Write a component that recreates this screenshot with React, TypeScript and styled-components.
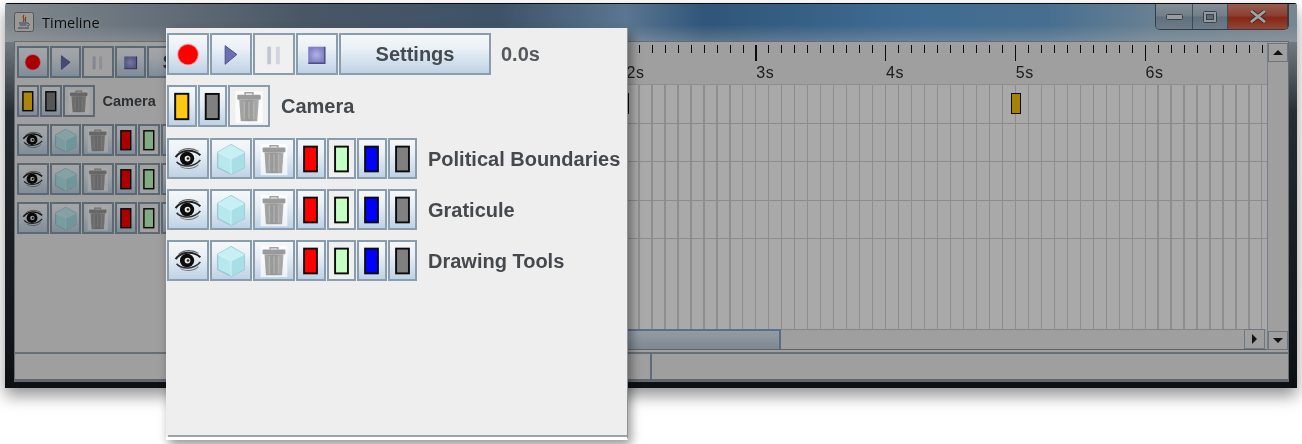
import React from 'react';
import styled, { createGlobalStyle, css } from 'styled-components';

const GlobalStyle = createGlobalStyle`
  html, body {
    margin: 0;
    padding: 0;
    background: #ffffff;
    font-family: 'Liberation Sans', Arial, sans-serif;
    overflow: hidden;
  }
`;

const SECOND = 129.75;
const layers = ['Political Boundaries', 'Graticule', 'Drawing Tools'];
const seconds = [0, 1, 2, 3, 4, 5, 6];

const Page = styled.div`
  position: relative;
  width: 1302px;
  height: 444px;
  padding: 3px 0 0 5px;
  box-sizing: border-box;
  filter: blur(0.45px);
`;

const Window = styled.div`
  position: relative;
  width: 1292px;
  height: 385px;
  display: flex;
  flex-direction: column;
  box-shadow: 0 8px 16px rgba(0, 0, 0, 0.42);
  border-radius: 3px 3px 0 0;
  overflow: hidden;
  background: linear-gradient(180deg, #a9b5bf 40px, #3b434c 110px, #14181d 100%);
`;

const Dim = styled.div`
  position: absolute;
  inset: 0;
  background: rgba(0, 0, 0, 0.33);
  pointer-events: none;
`;

const TitleBar = styled.div`
  height: 39px;
  flex: none;
  display: flex;
  align-items: flex-start;
  box-sizing: border-box;
  padding-left: 9px;
  border-top: 1px solid #0a0d10;
  background:
    linear-gradient(180deg, transparent 55%, rgba(255, 255, 255, 0.38) 100%),
    linear-gradient(90deg, #c2ccd4 0, #9aa9b8 140px, #6d8198 300px, #5d7c9c 495px, #87b0d8 620px, #4780b6 700px, #5e9fda 900px, #6aa5d8 1040px, #9cc0da 1150px, #b4c8d8 100%);
`;

const AppIcon = styled.svg`
  width: 20px;
  height: 20px;
  margin-top: 8px;
`;

const WindowTitle = styled.span`
  margin: 9px 0 0 8px;
  font-family: 'Open Sans', 'Noto Sans', sans-serif;
  font-size: 14.5px;
  line-height: 20px;
  color: #0e1418;
  text-shadow: 0 0 5px rgba(255, 255, 255, 0.55);
`;

const Controls = styled.div`
  margin: 0 8px 0 auto;
  height: 25px;
  display: flex;
  border: 1px solid #4d5c6a;
  border-top: 0;
  border-radius: 0 0 5px 5px;
  overflow: hidden;
`;

const Control = styled.div<{ $w: number; $close?: boolean }>`
  width: ${(p) => p.$w}px;
  box-sizing: border-box;
  display: flex;
  align-items: center;
  justify-content: center;
  border-right: 1px solid rgba(60, 80, 100, 0.7);
  background: ${(p) =>
    p.$close
      ? 'linear-gradient(180deg, #e08a78 0, #d3604c 45%, #c63a22 55%, #dc6a50 100%)'
      : 'linear-gradient(180deg, #c6d4e0 0, #a9bccc 48%, #8ea6bb 52%, #a4bacb 100%)'};
`;

const ControlIcon = styled.svg`
  display: block;
`;

const Frame = styled.div`
  flex: 1;
  min-height: 0;
  display: flex;
  flex-direction: column;
  padding: 0 9px 7px 10px;
`;

const Content = styled.div`
  flex: 1;
  min-height: 0;
  display: flex;
  flex-direction: column;
  background: #eeeeee;
  box-shadow: 0 0 0 1px #95a2ad;
`;

const Body = styled.div`
  height: 308px;
  flex: none;
  display: flex;
`;

const LeftPanel = styled.div`
  width: 351px;
  flex: none;
  box-sizing: border-box;
  padding: 4px 0 0 2px;
  display: flex;
  flex-direction: column;
  gap: 7.5px;
  overflow: hidden;
`;

const Timeline = styled.div`
  flex: 1;
  min-width: 0;
  display: flex;
  flex-direction: column;
`;

const Ruler = styled.div`
  height: 42px;
  flex: none;
  display: flex;
  overflow: hidden;
`;

const Second = styled.div`
  position: relative;
  width: ${SECOND}px;
  flex: none;
  box-sizing: border-box;
  padding: 22px 0 0 1px;
  font-size: 16px;
  line-height: 18px;
  letter-spacing: 0.6px;
  color: #2c2c2c;
  background: repeating-linear-gradient(90deg, #111 0 1.4px, transparent 1.4px ${SECOND / 10}px) 0 3px / 100% 8px no-repeat;
  &::before {
    content: '';
    position: absolute;
    left: 0;
    top: 3px;
    width: 1.4px;
    height: 16px;
    background: #111;
  }
`;

const Grid = styled.div`
  flex: 1;
  min-height: 0;
  display: flex;
  flex-direction: column;
  border-top: 1px solid #d6d6d6;
  background: repeating-linear-gradient(90deg, #d4d4d4 0 1.2px, #fcfcfc 1.2px ${SECOND / 10}px);
`;

const Track = styled.div`
  position: relative;
  height: 38.5px;
  flex: none;
  border-bottom: 1px solid #d0d0d0;
  box-sizing: border-box;
`;

const Key = styled.div<{ $time: number }>`
  position: absolute;
  left: ${(p) => p.$time * SECOND - 4}px;
  top: 8px;
  width: 10px;
  height: 21px;
  box-sizing: border-box;
  border: 1.5px solid #111;
  background: #f6c00a;
`;

const HScroll = styled.div`
  height: 20px;
  flex: none;
  display: flex;
  border-bottom: 1px solid #8d979f;
`;

const Thumb = styled.div`
  width: 415px;
  flex: none;
  box-sizing: border-box;
  border-top: 2px solid #86a5d6;
  border-right: 2px solid #86a0c8;
  background: linear-gradient(180deg, #dce6ef 0, #d4e0ec 30%, #bccbdb 100%);
`;

const HTrack = styled.div`
  flex: 1;
  border-top: 1px solid #c6c6c6;
`;

const ArrowButton = styled.div<{ $dir: 'up' | 'down' | 'right' }>`
  position: relative;
  flex: none;
  box-sizing: border-box;
  display: flex;
  align-items: center;
  justify-content: center;
  border: 1px solid #a4b2c0;
  background: #eeeeee;
  ${(p) =>
    p.$dir === 'right'
      ? css`
          width: 21px;
          height: 100%;
          margin-right: 2px;
        `
      : css`
          width: 100%;
          height: 19px;
        `}
  &::after {
    content: '';
    width: 0;
    height: 0;
    ${(p) =>
      p.$dir === 'up' &&
      css`
        border: 5px solid transparent;
        border-top: 0;
        border-bottom: 5px solid #1c1c1c;
      `}
    ${(p) =>
      p.$dir === 'down' &&
      css`
        border: 5px solid transparent;
        border-bottom: 0;
        border-top: 5px solid #1c1c1c;
      `}
    ${(p) =>
      p.$dir === 'right' &&
      css`
        border: 5px solid transparent;
        border-right: 0;
        border-left: 5px solid #1c1c1c;
      `}
  }
`;

const VScroll = styled.div`
  width: 21px;
  flex: none;
  display: flex;
  flex-direction: column;
  justify-content: space-between;
  box-sizing: border-box;
  border-left: 1px solid #b0bcc8;
  padding-top: 1px;
`;

const StatusBar = styled.div`
  flex: 1;
  min-height: 0;
  margin-top: 2px;
  display: flex;
  box-sizing: border-box;
  border-top: 2px solid #9aa4ae;
  border-bottom: 2px solid #8d979f;
`;

const StatusCell = styled.div<{ $w?: number }>`
  ${(p) => (p.$w ? `width: ${p.$w}px; flex: none; border-right: 2px solid #8ba0b8;` : 'flex: 1;')}
  box-sizing: border-box;
`;

const Popup = styled.div`
  position: absolute;
  left: 166px;
  top: 28px;
  width: 462px;
  height: 412px;
  box-sizing: border-box;
  padding: 5px 0 0 1px;
  display: flex;
  flex-direction: column;
  gap: 10px;
  background: #eeeeee;
  border-right: 1px solid #8e9397;
  border-bottom: 3px solid #ffffff;
  box-shadow: 3px 5px 10px rgba(0, 0, 0, 0.42);
  &::after {
    content: '';
    position: absolute;
    left: 2px;
    right: 0;
    bottom: 0;
    height: 2px;
    background: #9aa3a8;
  }
`;

const Row = styled.div<{ $small?: boolean; $h?: number; $after?: number }>`
  display: flex;
  align-items: center;
  flex: none;
  gap: 1px;
  height: ${(p) => p.$h ?? (p.$small ? 31.5 : 42)}px;
  margin-bottom: ${(p) => p.$after ?? 0}px;
`;

const flatLook = css`
  background: #f0f0f0;
`;

const glossLook = css`
  background: linear-gradient(180deg, #f5f8fa 0, #eaf0f6 35%, #bfd2e5 100%);
`;

const ToolButton = styled.div<{ $w: number; $flat?: boolean }>`
  width: ${(p) => p.$w}px;
  height: 100%;
  flex: none;
  box-sizing: border-box;
  border: 2px solid #8a9daf;
  display: flex;
  align-items: center;
  justify-content: center;
  padding-top: 1px;
  font-weight: bold;
  font-size: 20px;
  color: #444b50;
  ${(p) => (p.$flat ? flatLook : glossLook)}
`;

const Glyph = styled.svg`
  display: block;
  width: calc(100% + 4px);
  height: calc(100% + 4px);
  margin: -3px -2px -2px;
  flex: none;
`;

const Label = styled.span<{ $small?: boolean }>`
  margin-left: ${(p) => (p.$small ? 7 : 10)}px;
  padding-top: 1px;
  font-weight: bold;
  font-size: ${(p) => (p.$small ? 14.5 : 20)}px;
  white-space: nowrap;
  color: #45494d;
`;

const Elapsed = styled(Label)`
  margin-left: 9px;
  color: #55595c;
`;

const RecordGlyph = () => (
  <Glyph viewBox="0 0 42 42">
    <circle cx="21" cy="21" r="11" fill="#ff4040" opacity="0.5" />
    <circle cx="21" cy="21" r="10" fill="#ff0000" />
  </Glyph>
);

const PlayGlyph = () => (
  <Glyph viewBox="0 0 42 42">
    <path d="M15 12 L27 21 L15 31 Z" fill="#6a6fb0" stroke="#4a5090" strokeWidth="1" />
  </Glyph>
);

const PauseGlyph = () => (
  <Glyph viewBox="0 0 42 42">
    <rect x="14" y="13" width="4" height="18" fill="#c4c8d4" />
    <rect x="23" y="13" width="4" height="18" fill="#d2d5de" />
  </Glyph>
);

const StopGlyph = () => (
  <Glyph viewBox="0 0 42 42">
    <defs>
      <radialGradient id="stopFill">
        <stop offset="0" stopColor="#b2b2e8" />
        <stop offset="1" stopColor="#7f7fc4" />
      </radialGradient>
    </defs>
    <rect x="12" y="13" width="17" height="17" fill="url(#stopFill)" />
    <path d="M12 30 H29 V13" fill="none" stroke="#4a4e80" strokeWidth="1.5" />
  </Glyph>
);

const Swatch = ({ color }: { color: string }) => (
  <Glyph viewBox="0 0 30 42">
    <rect x="8" y="8" width="13.5" height="26" fill={color} stroke="#0c0c0c" strokeWidth="2" />
  </Glyph>
);

const TrashGlyph = () => (
  <Glyph viewBox="0 0 42 42">
    <defs>
      <linearGradient id="bin" x1="0" x2="1" y1="0" y2="0">
        <stop offset="0" stopColor="#a6a6a6" />
        <stop offset="0.5" stopColor="#969696" />
        <stop offset="1" stopColor="#adadad" />
      </linearGradient>
    </defs>
    <rect x="7" y="5" width="28" height="33" fill="#ffffff" opacity="0.7" />
    <path d="M17 9 V7 H25 V9" fill="none" stroke="#a0a0a0" strokeWidth="1.6" />
    <rect x="9" y="9" width="24" height="5" rx="1" fill="#9a9a9a" />
    <path d="M11 14 H31 L29.5 36 H12.5 Z" fill="url(#bin)" />
    <path d="M16 16 V34 M21 16 V34 M26 16 V34" stroke="#b8b8b8" strokeWidth="1.2" />
  </Glyph>
);

const EyeGlyph = () => (
  <Glyph viewBox="0 0 42 42">
    <path d="M8 19 C14 11 26 10 34 17" fill="none" stroke="#222" strokeWidth="2.2" />
    <path d="M11 14 C17 9 26 9 32 13" fill="none" stroke="#666" strokeWidth="1.1" />
    <path d="M9 24 C15 30 27 30 34 22" fill="none" stroke="#333" strokeWidth="1.6" />
    <path d="M13 29 C19 32 27 32 32 27" fill="none" stroke="#777" strokeWidth="1.1" />
    <ellipse cx="20" cy="20.5" rx="7.5" ry="7" fill="#0c0c0c" />
    <circle cx="20.5" cy="20.5" r="3" fill="#e8e8e8" />
    <circle cx="21" cy="20.5" r="1.4" fill="#222" />
  </Glyph>
);

const CubeGlyph = () => (
  <Glyph viewBox="0 0 42 42">
    <path d="M21 6 L35 14 V30 L21 37 L7 30 V14 Z" fill="#b6e8ee" stroke="#9cc9d4" strokeWidth="1.5" />
    <path d="M7 14 L21 21 L35 14 L21 6 Z" fill="#c6f0f4" />
    <path d="M21 21 L35 14 V30 L21 37 Z" fill="#a8dfe6" />
    <path d="M7 14 L21 21 L35 14 M21 21 V37" fill="none" stroke="#d2f4f6" strokeWidth="1" />
  </Glyph>
);

const Sizes = {
  big: { icon: 42, swatch: 29.5, first: 30, second: 29, settings: 152 },
  small: { icon: 31.5, swatch: 22, first: 22, second: 22, settings: 110 },
};

const Controlbar = ({ small }: { small?: boolean }) => {
  const s = small ? Sizes.small : Sizes.big;
  return (
    <Row $small={small}>
      <ToolButton $w={s.icon}><RecordGlyph /></ToolButton>
      <ToolButton $w={s.icon}><PlayGlyph /></ToolButton>
      <ToolButton $w={s.icon} $flat><PauseGlyph /></ToolButton>
      <ToolButton $w={s.icon}><StopGlyph /></ToolButton>
      <ToolButton $w={s.settings}>Settings</ToolButton>
      <Elapsed $small={small}>0.0s</Elapsed>
    </Row>
  );
};

const CameraRow = ({ small }: { small?: boolean }) => {
  const s = small ? Sizes.small : Sizes.big;
  return (
    <Row $small={small} $after={small ? 0 : 1}>
      <ToolButton $w={s.first}><Swatch color="#ffc814" /></ToolButton>
      <ToolButton $w={s.second}><Swatch color="#808080" /></ToolButton>
      <ToolButton $w={s.icon} $flat><TrashGlyph /></ToolButton>
      <Label $small={small}>Camera</Label>
    </Row>
  );
};

const LayerRow = ({ name, small }: { name: string; small?: boolean }) => {
  const s = small ? Sizes.small : Sizes.big;
  return (
    <Row $small={small} $h={small ? 31.5 : 41}>
      <ToolButton $w={s.icon}><EyeGlyph /></ToolButton>
      <ToolButton $w={s.icon}><CubeGlyph /></ToolButton>
      <ToolButton $w={s.icon}><TrashGlyph /></ToolButton>
      <ToolButton $w={s.swatch}><Swatch color="#ff0000" /></ToolButton>
      <ToolButton $w={s.swatch} $flat><Swatch color="#c4ffc4" /></ToolButton>
      <ToolButton $w={s.swatch}><Swatch color="#0000ff" /></ToolButton>
      <ToolButton $w={s.swatch}><Swatch color="#808080" /></ToolButton>
      <Label $small={small}>{name}</Label>
    </Row>
  );
};

const App: React.FC = () => (
  <>
    <GlobalStyle />
    <Page>
      <Window>
        <TitleBar>
          <AppIcon viewBox="0 0 20 20">
            <rect x="0.5" y="0.5" width="19" height="19" rx="2" fill="#e8e4dc" stroke="#7a8288" />
            <path d="M10 3 C7 6 12 6 9 10 M12 5 C10 7 13 8 11 10" fill="none" stroke="#c8551e" strokeWidth="1.2" />
            <path d="M5 11 H13 M5.5 13 H12.5 M4 16 H15" fill="none" stroke="#4a6a96" strokeWidth="1.2" />
            <path d="M13 11 C16 11 16 14 13 14" fill="none" stroke="#4a6a96" strokeWidth="1" />
          </AppIcon>
          <WindowTitle>Timeline</WindowTitle>
          <Controls>
            <Control $w={37}>
              <ControlIcon width="17" height="6" viewBox="0 0 17 6">
                <rect x="0.5" y="0.5" width="16" height="5" rx="1" fill="#e4e8ec" stroke="#55606a" />
              </ControlIcon>
            </Control>
            <Control $w={35}>
              <ControlIcon width="14" height="12" viewBox="0 0 14 12">
                <rect x="0.5" y="0.5" width="13" height="11" rx="1" fill="#dfe5ea" stroke="#55606a" />
                <rect x="3.5" y="3.5" width="7" height="5" fill="#8aa0b4" stroke="#55606a" />
              </ControlIcon>
            </Control>
            <Control $w={60} $close>
              <ControlIcon width="20" height="13" viewBox="0 0 20 13">
                <path d="M3 1 L17 12 M17 1 L3 12" stroke="#4a3a38" strokeWidth="4.4" />
                <path d="M3 1 L17 12 M17 1 L3 12" stroke="#f4f0ee" strokeWidth="2.8" />
              </ControlIcon>
            </Control>
          </Controls>
        </TitleBar>
        <Frame>
          <Content>
            <Body>
              <LeftPanel>
                <Controlbar small />
                <CameraRow small />
                {layers.map((name) => (
                  <LayerRow key={name} name={name} small />
                ))}
              </LeftPanel>
              <Timeline>
                <Ruler>
                  {seconds.map((n) => (
                    <Second key={n}>{n}s</Second>
                  ))}
                </Ruler>
                <Grid>
                  <Track>
                    <Key $time={1.98} />
                    <Key $time={5} />
                  </Track>
                  <Track />
                  <Track />
                  <Track />
                </Grid>
                <HScroll>
                  <Thumb />
                  <HTrack />
                  <ArrowButton $dir="right" />
                </HScroll>
              </Timeline>
              <VScroll>
                <ArrowButton $dir="up" />
                <ArrowButton $dir="down" />
              </VScroll>
            </Body>
            <StatusBar>
              <StatusCell $w={637} />
              <StatusCell />
            </StatusBar>
          </Content>
        </Frame>
        <Dim />
      </Window>
      <Popup>
        <Controlbar />
        <CameraRow />
        {layers.map((name) => (
          <LayerRow key={name} name={name} />
        ))}
      </Popup>
    </Page>
  </>
);

export default App;
